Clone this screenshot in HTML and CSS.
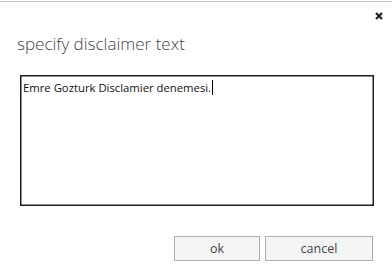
FILE: index.html
```html
<!DOCTYPE html>
<html>
<head>
<meta charset="utf-8">
<link rel="stylesheet" href="styles.css">
</head>
<body>
<div class="dialog">
  <div class="topbar">
    <span class="close" aria-label="close">
      <svg width="8" height="8" viewBox="0 0 8 8"><path d="M1 1L7 7M7 1L1 7" stroke="#222" stroke-width="2.2"/></svg>
    </span>
  </div>
  <h1 class="title">specify disclaimer text</h1>
  <div class="editor"><span class="text">Emre Gozturk Disclamier denemesi.</span><span class="caret"></span></div>
  <div class="actions">
    <button class="btn ok">ok</button>
    <button class="btn cancel">cancel</button>
  </div>
</div>
</body>
</html>
```
FILE: styles.css
```css
html, body {
  margin: 0;
  padding: 0;
  background: #fff;
}
body {
  width: 392px;
  height: 267px;
  overflow: hidden;
  font-family: "Open Sans", "Noto Sans", sans-serif;
  color: #333;
}
.dialog {
  border-top: 1px solid #c8c8c8;
  margin-top: 1px;
  padding: 0 18px 0 20px;
  display: flex;
  flex-direction: column;
}
.topbar {
  display: flex;
  justify-content: flex-end;
  height: 20px;
  padding-top: 10px;
  margin-right: -9px;
}
.close {
  width: 8px;
  height: 8px;
  display: block;
}
.close svg { display: block; }
.title {
  margin: 0 0 0 -3px;
  font-weight: 300;
  font-size: 17px;
  line-height: 24px;
  color: #444;
  letter-spacing: 0;
}
.editor {
  margin-top: 19px;
  height: 121px;
  border: 1px solid #1e1e1e;
  box-shadow: inset 0 0 0 0.5px #1e1e1e;
  padding: 4px 2px;
  font-size: 11.3px;
  line-height: 15px;
  color: #111;
  display: flex;
  align-items: flex-start;
}
.caret {
  display: inline-block;
  width: 1px;
  height: 15px;
  background: #000;
  margin-left: 1px;
}
.actions {
  display: flex;
  justify-content: flex-end;
  gap: 5px;
  margin-top: 30px;
}
.btn {
  font-family: "Open Sans", "Noto Sans", sans-serif;
  font-size: 12.5px;
  color: #444;
  background: #f4f4f4;
  border: 1px solid #a9b1b3;
  height: 25px;
  padding: 0;
  margin: 0;
}
.ok { width: 86px; }
.cancel { width: 108px; margin-right: 1px; }
```
